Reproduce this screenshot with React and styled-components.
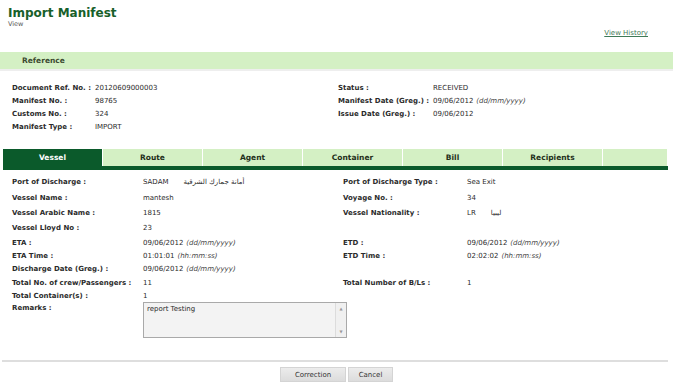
import React from "react";
import styled, { createGlobalStyle } from "styled-components";

const GlobalStyle = createGlobalStyle`
  body {
    margin: 0;
    background: #fff;
    font-family: "DejaVu Sans", Verdana, sans-serif;
    color: #2b2b2b;
  }
`;

const Page = styled.div`
  width: 673px;
  height: 390px;
  overflow: hidden;
`;

const Header = styled.div`
  height: 52px;
  display: flex;
  justify-content: space-between;
`;

const TitleBox = styled.div`
  padding: 6px 0 0 8px;
`;

const Title = styled.h1`
  margin: 0;
  font-size: 12px;
  line-height: 14px;
  font-weight: bold;
  color: #17602a;
`;

const Sub = styled.div`
  font-size: 6.5px;
  line-height: 8px;
  color: #555;
`;

const HistoryLink = styled.a`
  margin: 29px 25px 0 0;
  font-size: 7px;
  line-height: 9px;
  height: 9px;
  color: #3f7a57;
  text-decoration: underline;
`;

const SectionBar = styled.div`
  height: 17px;
  display: flex;
  align-items: center;
  padding-left: 22px;
  background: #d4f0c4;
  border-bottom: 2px solid #eeeeee;
  font-size: 7.5px;
  font-weight: bold;
  color: #3c4a30;
`;

const RefGrid = styled.div`
  display: flex;
  padding: 10px 0 0 12px;
  height: 78px;
  box-sizing: border-box;
`;

const RefCol = styled.div`
  width: ${(p) => p.w}px;
`;

const RefRow = styled.div`
  display: flex;
  height: 13px;
  align-items: center;
`;

const Label = styled.span`
  display: inline-block;
  width: ${(p) => p.w}px;
  flex-shrink: 0;
  font-size: 7px;
  font-weight: bold;
  color: #2b2b2b;
  white-space: nowrap;
`;

const Value = styled.span`
  font-size: 7px;
  color: #2b2b2b;
  white-space: nowrap;
`;

const Hint = styled.i`
  color: #444;
  margin-left: 3px;
`;

const Arabic = styled.span`
  margin-left: 15px;
  font-size: 7px;
  font-family: "DejaVu Sans", "Noto Sans", sans-serif;
`;

const TabBar = styled.div`
  display: flex;
  margin: 0 5px 0 3px;
  border-bottom: 4px solid #0b5a2b;
`;

const Tab = styled.div`
  width: ${(p) => p.w}px;
  height: 17px;
  display: flex;
  align-items: center;
  justify-content: center;
  font-size: 7.5px;
  font-weight: bold;
  background: ${(p) => (p.active ? "#0b5a2b" : "#d4f0c4")};
  color: ${(p) => (p.active ? "#fff" : "#1f2f1a")};
  border-right: 1px solid #fff;
  box-sizing: border-box;
`;

const Fields = styled.div`
  padding: 4px 0 0 12px;
`;

const FieldRow = styled.div`
  display: flex;
  height: ${(p) => p.h}px;
  align-items: ${(p) => (p.top ? "flex-start" : "center")};
`;

const Cell = styled.div`
  width: ${(p) => p.w}px;
  display: flex;
  align-items: center;
`;

const RemarksLabel = styled(Label)`
  margin-top: 2px;
`;

const RemarksBox = styled.div`
  width: 204px;
  height: 36px;
  display: flex;
  border: 1px solid #a9a9a9;
  background: #f3f3f3;
  box-sizing: border-box;
`;

const RemarksText = styled.div`
  flex: 1;
  padding: 2px 3px;
  font-size: 7px;
  color: #2b2b2b;
`;

const ScrollTrack = styled.div`
  width: 10px;
  display: flex;
  flex-direction: column;
  justify-content: space-between;
  align-items: center;
  border-left: 1px solid #dcdcdc;
  background: #f0f0f0;
  font-size: 4px;
  color: #999;
  padding: 3px 0;
`;

const Divider = styled.div`
  margin: 20px 5px 0 2px;
  height: 2px;
  background: #dedede;
`;

const ButtonRow = styled.div`
  display: flex;
  justify-content: center;
  gap: 2px;
  padding: 5px 0 0 0;
`;

const Button = styled.button`
  width: ${(p) => p.w}px;
  height: 15px;
  padding: 0;
  border: 1px solid #d4d4d4;
  background: linear-gradient(#ececec, #dcdcdc);
  font-family: "DejaVu Sans", Verdana, sans-serif;
  font-size: 7px;
  color: #333;
`;

const tabs = [
  ["Vessel", 100, true],
  ["Route", 100],
  ["Agent", 100],
  ["Container", 100],
  ["Bill", 100],
  ["Recipients", 100],
  ["", 65],
];

const rows = [
  { h: 16, l: "Port of Discharge :", v: <>SADAM<Arabic>أمانة جمارك الشرقية</Arabic></>, rl: "Port of Discharge Type :", rv: "Sea Exit" },
  { h: 16, l: "Vessel Name :", v: "mantesh", rl: "Voyage No. :", rv: "34" },
  { h: 14, l: "Vessel Arabic Name :", v: "1815", rl: "Vessel Nationality :", rv: <>LR<Arabic>ليبيا</Arabic></> },
  { h: 16, l: "Vessel Lloyd No :", v: "23" },
  { h: 13, l: "ETA :", v: <>09/06/2012<Hint>(dd/mm/yyyy)</Hint></>, rl: "ETD :", rv: <>09/06/2012<Hint>(dd/mm/yyyy)</Hint></> },
  { h: 13, l: "ETA Time :", v: <>01:01:01<Hint>(hh:mm:ss)</Hint></>, rl: "ETD Time :", rv: <>02:02:02<Hint>(hh:mm:ss)</Hint></> },
  { h: 14, l: "Discharge Date (Greg.) :", v: <>09/06/2012<Hint>(dd/mm/yyyy)</Hint></> },
  { h: 13, l: "Total No. of crew/Passengers :", v: "11", rl: "Total Number of B/Ls :", rv: "1" },
  { h: 13, l: "Total Container(s) :", v: "1" },
];

export default function App() {
  return (
    <Page>
      <GlobalStyle />
      <Header>
        <TitleBox>
          <Title>Import Manifest</Title>
          <Sub>View</Sub>
        </TitleBox>
        <HistoryLink>View History</HistoryLink>
      </Header>

      <SectionBar>Reference</SectionBar>

      <RefGrid>
        <RefCol w={326}>
          <RefRow><Label w={83}>Document Ref. No. :</Label><Value>20120609000003</Value></RefRow>
          <RefRow><Label w={83}>Manifest No. :</Label><Value>98765</Value></RefRow>
          <RefRow><Label w={83}>Customs No. :</Label><Value>324</Value></RefRow>
          <RefRow><Label w={83}>Manifest Type :</Label><Value>IMPORT</Value></RefRow>
        </RefCol>
        <RefCol w={320}>
          <RefRow><Label w={95}>Status :</Label><Value>RECEIVED</Value></RefRow>
          <RefRow><Label w={95}>Manifest Date (Greg.) :</Label><Value>09/06/2012<Hint>(dd/mm/yyyy)</Hint></Value></RefRow>
          <RefRow><Label w={95}>Issue Date (Greg.) :</Label><Value>09/06/2012</Value></RefRow>
        </RefCol>
      </RefGrid>

      <TabBar>
        {tabs.map(([name, w, active], i) => (
          <Tab key={i} w={w} active={active}>{name}</Tab>
        ))}
      </TabBar>

      <Fields>
        {rows.map((r, i) => (
          <FieldRow key={i} h={r.h}>
            <Cell w={131}><Label>{r.l}</Label></Cell>
            <Cell w={200}><Value>{r.v}</Value></Cell>
            <Cell w={124}><Label>{r.rl}</Label></Cell>
            <Cell w={180}><Value>{r.rv}</Value></Cell>
          </FieldRow>
        ))}
        <FieldRow h={38} top>
          <Cell w={131}><RemarksLabel>Remarks :</RemarksLabel></Cell>
          <RemarksBox>
            <RemarksText>report Testing</RemarksText>
            <ScrollTrack><span>▲</span><span>▼</span></ScrollTrack>
          </RemarksBox>
        </FieldRow>
      </Fields>

      <Divider />
      <ButtonRow>
        <Button w={66}>Correction</Button>
        <Button w={45}>Cancel</Button>
      </ButtonRow>
    </Page>
  );
}
